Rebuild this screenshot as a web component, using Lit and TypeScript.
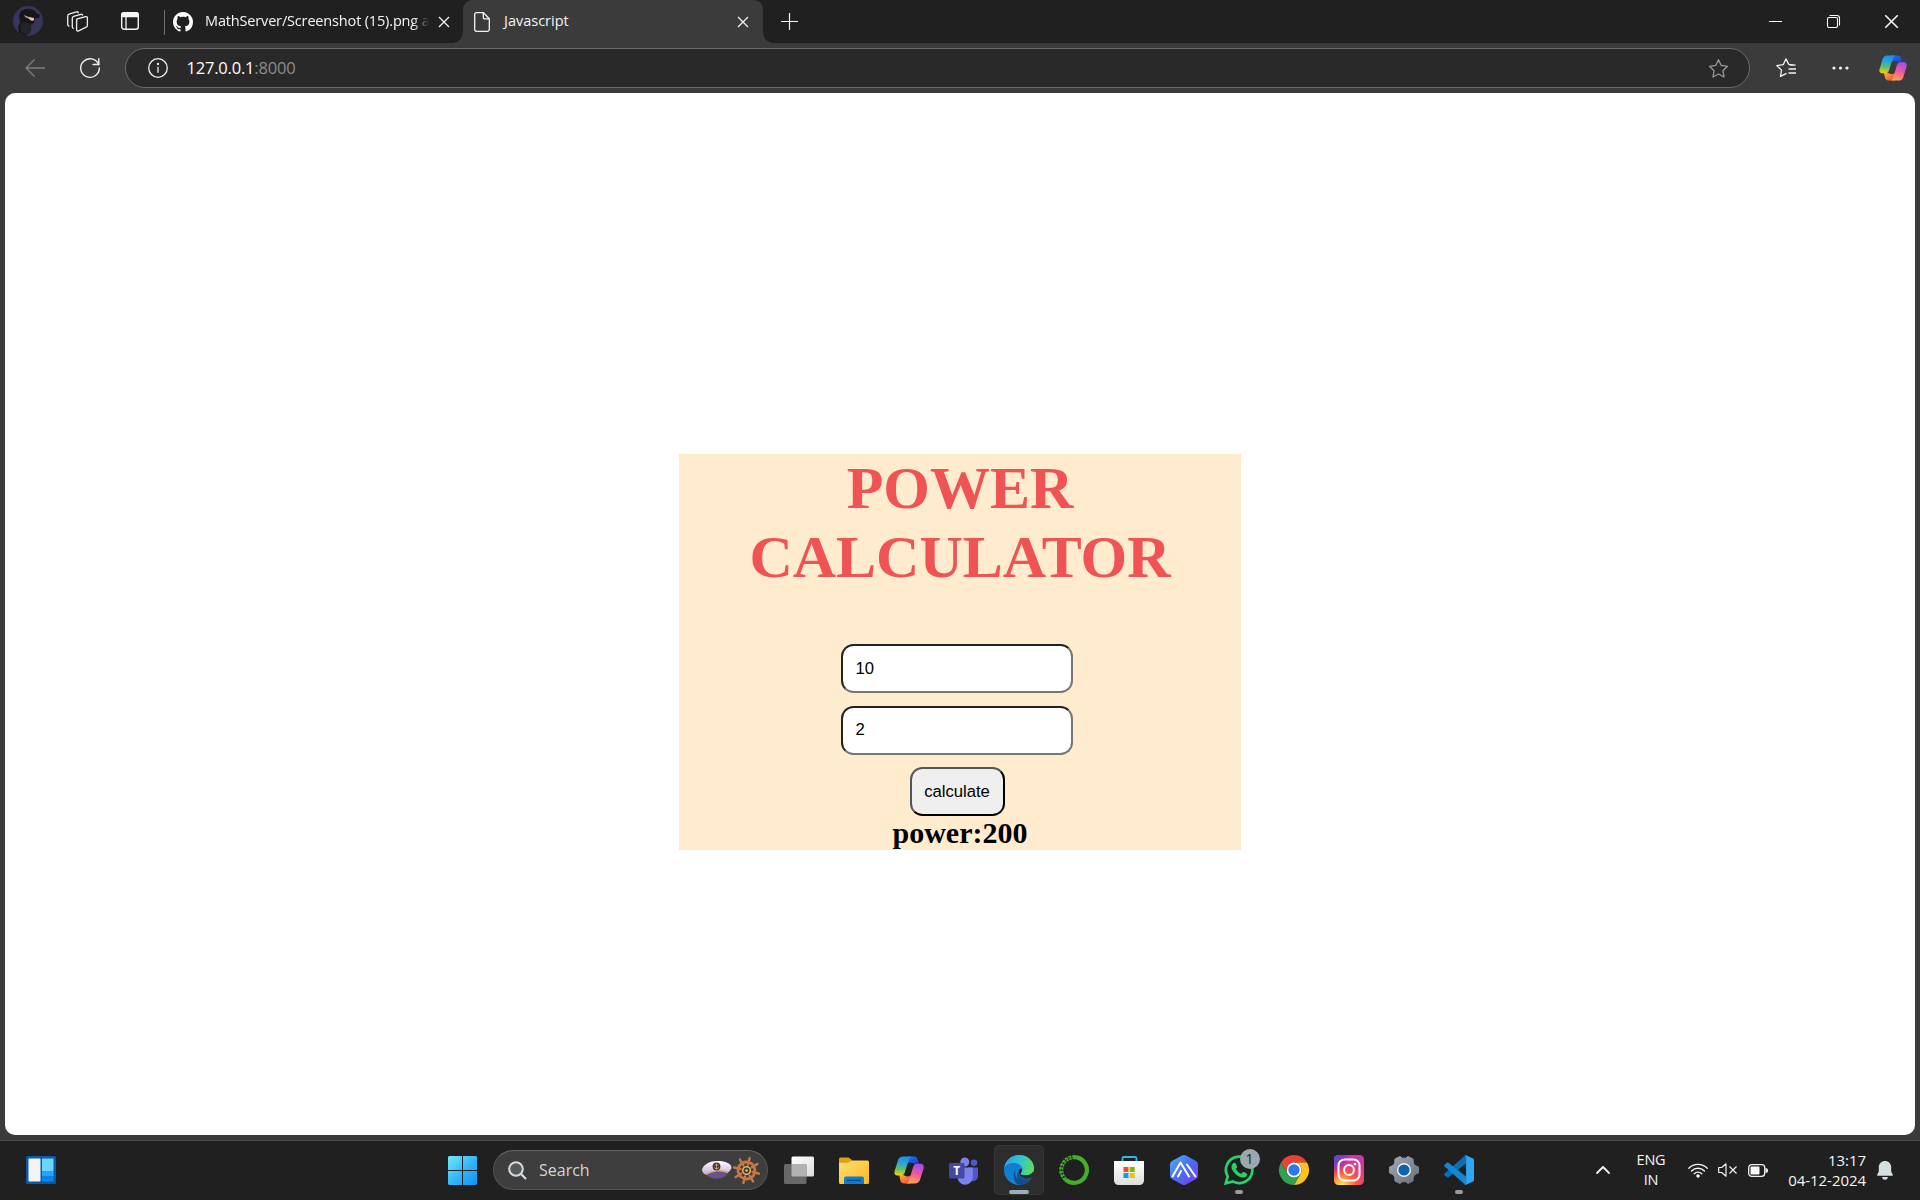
import { LitElement, html, css, svg } from "lit";
import { customElement, state } from "lit/decorators.js";

const closeIcon = (s: number) => html`<svg width=${s} height=${s} viewBox="0 0 12 12" fill="none" stroke="#f2f2f2" stroke-width="1.3"><path d="M1 1l10 10M11 1L1 11" /></svg>`;

const copilot = (id: string, s: number) => html`<svg width=${s} height=${s} viewBox="0 0 30 30">
  <defs>
    <linearGradient id="${id}a" x1="0.4" y1="0" x2="0.3" y2="1"><stop offset="0" stop-color="#1f8fef" /><stop offset=".35" stop-color="#2aa6d8" /><stop offset=".65" stop-color="#5fbf6a" /><stop offset="1" stop-color="#f5d000" /></linearGradient>
    <linearGradient id="${id}b" x1="0.7" y1="0" x2="0.4" y2="1"><stop offset="0" stop-color="#a04df5" /><stop offset=".5" stop-color="#f0569a" /><stop offset="1" stop-color="#ffa552" /></linearGradient>
    <linearGradient id="${id}c" x1="0" y1="0" x2="1" y2="1"><stop offset="0" stop-color="#1a7cf0" /><stop offset="1" stop-color="#2038c8" /></linearGradient>
    <linearGradient id="${id}d" x1="0" y1="0" x2="1" y2="1"><stop offset="0" stop-color="#ffb03a" /><stop offset="1" stop-color="#f0483a" /></linearGradient>
  </defs>
  <path d="M13.500 1.500h6.700c2.200 0 3 1.300 3.600 3.200l1.200 4.100h-4.200c-1.500 0-2.600-1.300-4.200-1.300-1.400 0-2.300.3-3 1z" fill="url(#${id}c)" />
  <path d="M16.500 28.500H10c-2.200 0-3.100-1.300-3.700-3.200L5.200 20h3.500c1.800 0 3 1.500 4.500 1.500 1.300 0 2.400-.3 3.300-1z" fill="url(#${id}d)" />
  <path d="M9 1.500h8.800c-1.600.4-2.500 1.700-3.100 3.700L10.800 17.500c-.7 2.200-1.900 3.100-4 3.100H4C.8 20.600-.2 18.800.7 15.800L4 5.200C4.800 2.700 6.500 1.500 9 1.500z" fill="url(#${id}a)" />
  <path d="M21 28.500h-8.800c1.600-.4 2.500-1.700 3.100-3.700L19.200 12c.7-2.200 1.900-3.200 4-3.200h3c3.200 0 4.200 2.100 3.300 5.100L26 24.800c-.8 2.500-2.500 3.700-5 3.700z" fill="url(#${id}b)" />
</svg>`;

const starPath = "M10 1.600l2.600 5.500 6 .8-4.400 4.200 1.100 6-5.300-2.900-5.300 2.900 1.100-6L1.400 7.900l6-.8z";

const gearTeeth = (n: number, r1: number, r2: number, w: number) =>
  Array.from({ length: n }, (_, i) => svg`<rect x=${-w / 2} y=${-r2} width=${w} height=${r2 - r1} rx="1.500" transform="rotate(${(i * 360) / n})" />`);

const appIcons: { name: string; mark?: string; art: unknown }[] = [
  {
    name: "view",
    art: html`<svg width="30" height="30" viewBox="0 0 30 30">
      <defs><linearGradient id="tv" x1="0" y1="0" x2="1" y2="1"><stop offset="0" stop-color="#fff" /><stop offset="1" stop-color="#dcdcdc" /></linearGradient></defs>
      <rect x="7.500" y="1.500" width="22.500" height="20" rx="1.500" fill="url(#tv)" />
      <rect x="0" y="9" width="22.500" height="20" rx="1.500" fill="#686868" />
      <path d="M7.500 9H21a1.500 1.500 0 0 1 1.500 1.500v11H9a1.500 1.500 0 0 1-1.500-1.500z" fill="#b2b2b2" />
    </svg>`,
  },
  {
    name: "files",
    art: html`<svg width="30" height="30" viewBox="0 0 30 30">
      <defs><linearGradient id="fe" x1="0" y1="0" x2="1" y2="1"><stop offset="0" stop-color="#ffdf78" /><stop offset="1" stop-color="#fbb91c" /></linearGradient></defs>
      <path d="M0 4A1.500 1.500 0 0 1 1.500 2.500h8.300l3 2.500L9 9H0z" fill="#e0a106" />
      <path d="M0 7.800h8.500c1 0 1.500-.4 2.100-1L12 5.500h16.500A1.500 1.500 0 0 1 30 7v20.500a1.500 1.500 0 0 1-1.500 1.500h-27A1.500 1.500 0 0 1 0 27.500z" fill="url(#fe)" />
      <path d="M5 29v-5.500A2 2 0 0 1 7 21.500h16a2 2 0 0 1 2 2V29z" fill="#0f7bd4" /><path d="M8.500 25.300h13" stroke="#064a8c" stroke-width="1.300" stroke-linecap="round" />
    </svg>`,
  },
  { name: "copilot", art: copilot("tb", 30) },
  {
    name: "teams",
    art: html`<svg width="30" height="30" viewBox="0 0 30 30">
      <circle cx="25" cy="7.700" r="3.200" fill="#5059c9" /><path d="M19 12.500h10v8a5.500 5.500 0 0 1-9.500 4z" fill="#4f58c8" />
      <circle cx="15.800" cy="7" r="4.500" fill="#7b83eb" />
      <path d="M8.500 12.500h15.300V22a7.300 7.300 0 0 1-15.300 0z" fill="#7b83eb" />
      <rect x="0" y="8" width="15.500" height="15.500" rx="1.500" fill="#4148a8" />
      <text x="7.700" y="20" font-family="Open Sans, sans-serif" font-weight="700" font-size="12" fill="#fff" text-anchor="middle">T</text>
    </svg>`,
  },
  {
    name: "edge",
    mark: "wide",
    art: html`<svg width="30" height="30" viewBox="0 0 30 30">
      <defs>
        <linearGradient id="ed1" x1="0" y1=".4" x2="1" y2=".6"><stop offset="0" stop-color="#2d9fe6" /><stop offset=".5" stop-color="#2fc5d5" /><stop offset="1" stop-color="#62dc55" /></linearGradient>
        <linearGradient id="ed2" x1="0" y1="0" x2=".6" y2="1"><stop offset="0" stop-color="#0d73c8" /><stop offset="1" stop-color="#1788df" /></linearGradient>
      </defs>
      <circle cx="15" cy="15" r="15" fill="url(#ed2)" />
      <path d="M12.200 13.500c-2.500 3.700-1.600 12.500 8.200 12 3-.2 5.400-1.500 7-2.400C24.800 27.500 20.300 30 15.500 30 9 29 8 18 12.200 13.500z" fill="#10508f" />
      <path d="M0 14C.7 6 7 0 15 0c9 0 15 6.300 15 13 0 4.500-3.400 7.300-8 7.300-3.200 0-5.600-1.200-5.200-2.200.5-1 1.700-1.700 1.700-3.600C18.500 10.500 14 8 9.500 8 4.500 8 .8 11 0 14z" fill="url(#ed1)" />
      <path d="M17 18c-1.300 1.200.5 2.700 5 2.300 3.200 0 5.800-1.500 7.100-3.500l1.100 1.800c-.5 1.800-1 3-1.700 3.700-7 4-14.200.2-13.900-6.300.2-1.500 1.300-2.500 2.500-2.500 1.500 1.500.8 3.500 0 4.500z" fill="#2d2d2d" />
      <path d="M28.500 22.300c-2.200 1.500-4.700 2.300-7.500 2-4-.4-6.800-3.600-6.700-7.800-3 4.500-.5 9.900 6.100 9.900 3 0 5.800-1 8.100-4.100z" fill="#10508f" />
    </svg>`,
  },
  {
    name: "ring",
    art: html`<svg width="30" height="30" viewBox="0 0 30 30" fill="none" stroke="#43b02a">
      <path d="M15 2.200a12.800 12.800 0 1 1-8.500 22.300" stroke-width="4.200" />
      <path d="M6.500 24.500A12.800 12.800 0 0 1 15 2.200" stroke-width="4" stroke-dasharray="2.800 .8" />
      <path d="M5.500 23A12.800 12.800 0 0 1 13.500 2.300" stroke="#202020" stroke-width="1" stroke-dasharray="2.200 1.500" />
    </svg>`,
  },
  {
    name: "store",
    art: html`<svg width="30" height="30" viewBox="0 0 30 30">
      <defs><linearGradient id="st" x1="0" y1="0" x2="0" y2="1"><stop offset="0" stop-color="#fff" /><stop offset="1" stop-color="#dedede" /></linearGradient></defs>
      <path d="M8.500 7V3.500A1.500 1.500 0 0 1 10 2h11a1.500 1.500 0 0 1 1.500 1.500V7" fill="none" stroke="#2bb9f0" stroke-width="1.800" />
      <path d="M0 6h30v19.500a4.500 4.500 0 0 1-4.500 4.500h-21A4.500 4.500 0 0 1 0 25.500z" fill="url(#st)" />
      <path d="M9.500 12h5v5h-5z" fill="#f25022" /><path d="M15.700 12h5v5h-5z" fill="#7fba00" /><path d="M9.500 18h5v5h-5z" fill="#00a4ef" /><path d="M15.700 18h5v5h-5z" fill="#ffb900" />
    </svg>`,
  },
  {
    name: "hex",
    art: html`<svg width="30" height="30" viewBox="0 0 30 30">
      <defs><linearGradient id="hx" x1="0" y1="0" x2="1" y2="1"><stop offset="0" stop-color="#4fb2f5" /><stop offset=".5" stop-color="#4a6cf0" /><stop offset="1" stop-color="#7a3cf0" /></linearGradient></defs>
      <path d="M13 .6q2-1 4 0l10 5.500q2 1.200 2 3.400v11q0 2.200-2 3.400l-10 5.500q-2 1-4 0L3 23.900q-2-1.200-2-3.400v-11q0-2.200 2-3.400z" fill="url(#hx)" />
      <path d="M3.500 21.500L11.500 7.500l8.500 14M9 21.500l3-5.500M18 9.500l8.500 12" fill="none" stroke="#fff" stroke-width="2" stroke-linecap="round" stroke-linejoin="round" />
    </svg>`,
  },
  {
    name: "chat",
    mark: "small",
    art: html`<svg width="30" height="30" viewBox="0 0 30 30">
      <path d="M1.800 28.300l1.900-6.900a13.200 13.200 0 1 1 5.100 5z" fill="none" stroke="#25d366" stroke-width="2.700" />
      <path d="M10.300 7.700c.6 0 1.100 0 1.500.9l1.200 2.900c.2.500 0 1-.3 1.400l-.9 1.100c1.300 2.300 3 3.800 5.400 4.900l1.300-1.500c.4-.5.8-.5 1.300-.3l2.700 1.300c.6.300.7.600.6 1.300-.4 2-2.200 3-4.200 2.900-5.300-.6-10.400-5.600-11.400-9.900-.3-2.100 1.200-5 2.800-5z" fill="#25d366" />
    </svg>`,
  },
  {
    name: "chrome",
    art: html`<svg width="30" height="30" viewBox="0 0 30 30">
      <path d="M2 7.500A15 15 0 0 1 28 7.500H15a7.500 7.500 0 0 0-6.500 11.200z" fill="#ea4335" />
      <path d="M28 7.500A15 15 0 0 1 15 30l6.500-11.300A7.500 7.500 0 0 0 15 7.500z" fill="#fcc21f" />
      <path d="M15 30A15 15 0 0 1 2 7.500l6.500 11.200a7.500 7.500 0 0 0 13 0z" fill="#2fa14f" />
      <circle cx="15" cy="15" r="7.400" fill="#fff" /><circle cx="15" cy="15" r="5.700" fill="#2f78ea" />
    </svg>`,
  },
  {
    name: "camera",
    art: html`<svg width="30" height="30" viewBox="0 0 30 30">
      <defs>
        <radialGradient id="ig1" cx=".27" cy="1.070" r="1"><stop offset="0" stop-color="#ffdd55" /><stop offset=".1" stop-color="#ffdd55" /><stop offset=".5" stop-color="#ff543e" /><stop offset="1" stop-color="#c837ab" /></radialGradient>
        <radialGradient id="ig2" cx="-.1" cy="0" r=".65"><stop offset="0" stop-color="#3771c8" /><stop offset=".3" stop-color="#5a50c8" /><stop offset="1" stop-color="#6600ff" stop-opacity="0" /></radialGradient>
      </defs>
      <rect width="30" height="30" rx="4.500" fill="url(#ig1)" /><rect width="30" height="30" rx="4.500" fill="url(#ig2)" />
      <g fill="none" stroke="#fff" stroke-width="2"><rect x="4.500" y="4.500" width="21" height="21" rx="6" /><circle cx="15" cy="15" r="4.900" /></g><circle cx="21" cy="9" r="1.300" fill="#fff" />
    </svg>`,
  },
  {
    name: "settings",
    art: html`<svg width="30" height="30" viewBox="-15 -15 30 30">
      <defs><linearGradient id="gs" x1="0" y1="0" x2="1" y2="1"><stop offset="0" stop-color="#a1a9b1" /><stop offset="1" stop-color="#66707a" /></linearGradient></defs>
      <path d="M-4-13.500l2.300 1.700h3.400L4-13.500 9-11l.3 3.800 1.500 2.700 3.700 1.500v6l-3.700 1.500-1.500 2.700L9 11l-5 2.500-2.300-1.700h-3.400L-4 13.500-9 11l-.3-3.800-1.500-2.700-3.700-1.500v-6l3.700-1.500 1.500-2.700L-9-11z" fill="url(#gs)" stroke="url(#gs)" stroke-linejoin="round" />
      <circle r="7" fill="#f1f3f5" /><circle r="5.600" fill="#0f63ad" />
    </svg>`,
  },
  {
    name: "code",
    mark: "small",
    art: html`<svg width="30" height="30" viewBox="0 0 30 30">
      <path d="M22 0v8.500L4.500 22.300q-.8.600-1.600 0L.6 20.300q-.9-.9 0-1.800L21 .5z" fill="#0b6fb8" />
      <path d="M22 30v-8.500L4.500 7.700q-.8-.6-1.600 0L.6 9.700q-.9.900 0 1.800L21 29.500z" fill="#1487d0" />
      <path d="M22 .2l7 3.200q1 .5 1 1.600v20q0 1.100-1 1.600l-7 3.200q-1 .3-1.800-.4 1.800.7 1.900-1.400V2Q22-.1 20.300.5 21.100-.1 22 .2z" fill="#2ea7f2" />
    </svg>`,
  },
];

@customElement("browser-tabs")
class BrowserTabs extends LitElement {
  static styles = css`
    :host { display: flex; height: 43px; background: #202020; color: #f4f4f4; font: 14.500px "Open Sans", "Noto Sans", sans-serif; }
    svg { display: block; flex: none; overflow: visible; }
    .cell { display: flex; align-items: center; justify-content: center; height: 42px; }
    .avatar { width: 56px; } .spaces { width: 43px; } .actions { width: 61px; }
    .divider { width: 1px; height: 25px; margin: 10px 0 0 4px; background: #707070; }
    .tab { display: flex; align-items: center; box-sizing: border-box; height: 43px; }
    .idle { width: 298px; padding-left: 8px; }
    .active { position: relative; width: 300px; padding-left: 11px; background: #3b3b3b; border-radius: 9px 9px 0 0; }
    .active::before, .active::after { content: ""; position: absolute; bottom: 0; width: 10px; height: 10px; }
    .active::before { left: -10px; background: radial-gradient(circle at 0 0, #202020 9.500px, #3b3b3b 10px); }
    .active::after { right: -10px; background: radial-gradient(circle at 100% 0, #202020 9.500px, #3b3b3b 10px); }
    .name { white-space: nowrap; line-height: 24px; margin-top: -2px; }
    .long { width: 224px; margin-left: 12px; letter-spacing: -0.160px; mask-image: linear-gradient(90deg, #000 208px, transparent 224px); }
    .short { width: 232px; margin-left: 14px; letter-spacing: 0; }
    .x { padding-top: 1px; margin-left: 9px; } .active .x { margin-left: 0; padding-left: 1px; }
    .plus { width: 52px; } .grow { flex: 1; }
    .win { width: 58px; }
  `;
  render() {
    return html`
      <div class="cell avatar"><svg width="30" height="30" viewBox="0 0 30 30">
        <circle cx="15" cy="15" r="15" fill="#38345a" />
        <path d="M8 5q5-3 10-2 4 1 5 4l4 2-1 3h-3l-2 3v2l-3 2v3l-1 5-4 3-7-3-1-6 2-5-1-6z" fill="#171717" />
        <path d="M7 18l5-2 6 2-1 9-3 2-6-3z" fill="#242424" /><path d="M16 11l5 1v2l-2 1-3-2z" fill="#efc0b4" /><path d="M11 9l5 2v2l-4-2z" fill="#a8989f" />
      </svg></div>
      <div class="cell spaces"><svg width="21" height="21" viewBox="0 0 21 21" fill="none" stroke="#eee" stroke-width="1.300" stroke-linejoin="round" stroke-linecap="round">
        <path d="M10.300 7.900l8.300-2.300q1.800-.4 1.800 1.400v7.500q0 1.300-1.200 1.700l-7.600 3.600q-2 .8-2-1.200V9.500q0-1.300.7-1.600z" />
        <path d="M15.500 4.200q-.2-1.300-1.600-.9L6.600 5.400Q5.300 5.900 5.300 7.200v8.500q0 1.300 1 1.600" /><path d="M11.300 1.900q-.3-1.500-1.800-1L2 3.200Q.7 3.700.7 5v8.300q0 1.600 1.200 1.700" />
      </svg></div>
      <div class="cell actions"><svg width="18" height="18" viewBox="0 0 18 18"><rect x=".7" y=".7" width="16.600" height="16.600" rx="2.500" fill="none" stroke="#f4f4f4" stroke-width="1.400" /><path d="M0 5.200V3Q0 0 3 0h12q3 0 3 3v2.200z" fill="#f4f4f4" /><path d="M5 5v12.500" stroke="#f4f4f4" stroke-width="1.300" /></svg></div>
      <div class="divider"></div>
      <div class="tab idle">
        <svg width="20" height="20" viewBox="0 0 16 16"><path fill="#fff" d="M8 0C3.580 0 0 3.580 0 8c0 3.540 2.290 6.530 5.470 7.590.4.070.55-.17.55-.38 0-.19-.01-.82-.01-1.490-2.010.37-2.530-.49-2.690-.94-.09-.23-.48-.94-.82-1.130-.28-.15-.68-.52-.01-.53.63-.01 1.080.58 1.230.82.720 1.210 1.870.87 2.330.66.070-.52.280-.87.510-1.070-1.780-.2-3.640-.89-3.640-3.950 0-.87.310-1.590.82-2.150-.08-.2-.36-1.020.08-2.120 0 0 .67-.21 2.200.82.640-.18 1.320-.27 2-.27s1.360.09 2 .27c1.530-1.040 2.200-.82 2.200-.82.440 1.100.16 1.920.08 2.120.51.560.82 1.270.82 2.150 0 3.070-1.870 3.750-3.650 3.950.29.250.54.730.54 1.480 0 1.070-.01 1.930-.01 2.200 0 .21.150.46.550.38A8.010 8.010 0 0 0 16 8c0-4.420-3.580-8-8-8z" /></svg>
        <span class="name long">MathServer/Screenshot (15).png a</span><span class="x">${closeIcon(12)}</span>
      </div>
      <div class="tab active">
        <svg width="16" height="20" viewBox="0 0 16 20" fill="none" stroke="#f2f2f2" stroke-width="1.300" stroke-linejoin="round"><path d="M2.500.7h7l5.800 6v10.800q0 1.800-1.800 1.800h-11q-1.800 0-1.800-1.800v-15Q.7.7 2.500.7z" /><path d="M9.300.7v4.500q0 1.700 1.700 1.700h4.300" /></svg>
        <span class="name short">Javascript</span><span class="x">${closeIcon(12)}</span>
      </div>
      <div class="cell plus"><svg width="17" height="17" viewBox="0 0 17 17" stroke="#f4f4f4" stroke-width="1.200"><path d="M8.500 0v17M0 8.500h17" /></svg></div>
      <div class="grow"></div>
      <div class="cell win"><svg width="13" height="13" viewBox="0 0 13 13"><path d="M0 6.500h13" stroke="#fff" /></svg></div>
      <div class="cell win"><svg width="13" height="13" viewBox="0 0 13 13" fill="none" stroke="#fff" stroke-width="1.100"><rect x=".5" y="2.500" width="10" height="10" rx="1.500" /><path d="M2.500.5H10q2.500 0 2.500 2.500v7.500" /></svg></div>
      <div class="cell win">${closeIcon(15)}</div>
    `;
  }
}

@customElement("browser-toolbar")
class BrowserToolbar extends LitElement {
  static styles = css`
    :host { display: flex; align-items: center; height: 50px; background: #3b3b3b; }
    svg { display: block; flex: none; overflow: visible; }
    .cell { display: flex; justify-content: center; flex: none; }
    .back { width: 70px; } .reload { width: 40px; margin-right: 15px; }
    .bar { display: flex; flex: none; align-items: center; box-sizing: border-box; width: 1625px; height: 40px; border: 1px solid #6b6b6b; border-radius: 20px; background: #292929; padding: 0 20px 0 21.500px; font: 16.500px "Open Sans", "Noto Sans", sans-serif; color: #fff; }
    .url { flex: 1; margin-left: 19px; letter-spacing: -0.200px; line-height: 24px; margin-top: -1px; }
    .port { color: #8d8d8d; }
    .fav { width: 71px; } .more { width: 39px; } .ai { width: 60px; box-sizing: border-box; padding-left: 6px; }
  `;
  render() {
    return html`
      <div class="cell back"><svg width="20" height="18" viewBox="0 0 20 18" fill="none" stroke="#7f7f7f" stroke-width="1.300"><path d="M20 9H1M9.500.5L1 9l8.500 8.500" /></svg></div>
      <div class="cell reload"><svg width="20" height="20" viewBox="0 0 20 20" fill="none" stroke="#f0f0f0" stroke-width="1.400" stroke-linecap="round"><path d="M18.600 6.500A9.300 9.300 0 1 0 19.300 10" /><path d="M18.800.8v5.700h-5.700" /></svg></div>
      <div class="bar">
        <svg width="20" height="20" viewBox="0 0 20 20" fill="none" stroke="#f0f0f0" stroke-width="1.300"><circle cx="10" cy="10" r="9.300" /><path d="M10 8.700v6" /><circle cx="10" cy="6" r=".5" fill="#fff" /></svg>
        <span class="url">127.0.0.1<span class="port">:8000</span></span>
        <svg width="21" height="21" viewBox="0 0 20 20" fill="none" stroke="#9a9a9a" stroke-width="1.200" stroke-linejoin="round"><path d=${starPath} /></svg>
      </div>
      <div class="cell fav"><svg width="20" height="20" viewBox="0 0 20 20" fill="none" stroke="#f2f2f2" stroke-width="1.300" stroke-linejoin="round"><path d="M19.500 7.200l-6.700-.8L10 .9 7.200 6.700.8 7.600l4.700 4.500-1 6.300 6-3M13.500 7.200h6M12.500 11h7.500M12.500 15h7.500" /></svg></div>
      <div class="cell more"><svg width="17" height="4" viewBox="0 0 17 4" fill="#f2f2f2"><circle cx="2" cy="2" r="1.600" /><circle cx="8.500" cy="2" r="1.600" /><circle cx="15" cy="2" r="1.600" /></svg></div>
      <div class="cell ai">${copilot("br", 28)}</div>
    `;
  }
}

@customElement("power-calculator")
class PowerCalculator extends LitElement {
  static styles = css`
    :host { display: block; width: 562px; height: 396px; background: #ffebcd; text-align: center; color: #000; font-family: "Liberation Serif", serif; overflow: hidden; }
    h1 { margin: 0 auto; width: 500px; font-size: 60px; line-height: 69px; color: #ef5353; }
    form { display: flex; flex-direction: column; align-items: center; gap: 13px; margin: 52px 6px 0 0; }
    input, button { box-sizing: border-box; height: 49px; border-width: 2px; border-radius: 12.500px; padding: 0 12.500px; font: 16.670px "Liberation Sans", sans-serif; color: #000; }
    input { width: 232px; background: #fff; border-style: solid; border-color: #222 #767676 #767676 #222; }
    .second { padding-bottom: 1px; }
    button { width: 95px; margin-top: -1px; padding: 0; background: #efefef; border-style: solid; border-color: #555 #000 #000 #555; }
    h2 { margin: 0; font-size: 30px; line-height: 34px; }
  `;
  @state() private watts = "200";
  private compute(e: Event) {
    e.preventDefault();
    const [i, r] = [...this.renderRoot.querySelectorAll("input")].map((n) => Number(n.value));
    this.watts = String(i * i * r);
  }
  render() {
    return html`<h1>POWER CALCULATOR</h1>
      <form @submit=${this.compute}><input value="10" /><input class="second" value="2" /><button>calculate</button></form>
      <h2>power:${this.watts}</h2>`;
  }
}

@customElement("task-bar")
class TaskBar extends LitElement {
  static styles = css`
    :host { display: flex; align-items: center; box-sizing: border-box; height: 60px; padding-bottom: 1px; border-top: 1px solid #484848; background: #202020; color: #f5f5f5; font: 15px "Open Sans", "Noto Sans", sans-serif; }
    svg { display: block; flex: none; overflow: visible; }
    .widgets { margin-left: 26px; }
    .start { margin-left: 392px; }
    .search { display: flex; flex: none; align-items: center; box-sizing: border-box; width: 275px; height: 40px; margin: 0 3px 0 16px; padding: 0 6px 0 14px; border: 1px solid #545454; border-top-color: #666; border-radius: 20px; background: #3e3e3e; color: #d4d4d4; font-size: 16px; }
    .hint { flex: 1; margin-left: 12px; letter-spacing: 0; }
    .app { position: relative; display: flex; flex: none; align-items: center; justify-content: center; width: 50px; height: 50px; margin: 0 2.500px; border-radius: 5px; }
    .wide { background: #2d2d2d; box-shadow: inset 0 0 0 1px #363636; }
    .wide::after, .small::after { content: ""; position: absolute; bottom: 1px; height: 4px; border-radius: 2px; }
    .wide::after { width: 20px; background: #9fadb5; } .small::after { width: 8px; background: #9b9b9b; }
    .badge { position: absolute; left: 26px; top: 4px; width: 20px; height: 20px; border-radius: 50%; background: #9ba9ae; color: #1c1c1c; font-size: 14px; line-height: 20px; text-align: center; }
    .grow { flex: 1; }
    .lang { width: 50px; margin: 0 12px 0 16px; text-align: center; line-height: 20px; letter-spacing: -0.200px; font-size: 14.500px; }
    .vol { margin: 0 11px 0 10px; }
    .clock { width: 90px; margin-left: 8px; text-align: right; line-height: 20px; font-size: 15px; letter-spacing: -0.050px; white-space: nowrap; }
    .bell { margin: 0 27px 0 11px; }
  `;
  render() {
    return html`
      <svg class="widgets" width="30" height="28" viewBox="0 0 30 28"><rect width="30" height="28" rx="1.500" fill="#0b5aa8" /><rect x="2.500" y="2.500" width="12" height="23" rx="1" fill="#f4f4f4" /><path d="M16 2.500h11.500v13H16z" fill="#68d6fb" /><path d="M16 15.500h11.500v5H16z" fill="#22a5f7" /><path d="M16 20.500h11.500v5H16z" fill="#0a84ea" /></svg>
      <svg class="start" width="29" height="29" viewBox="0 0 29 29"><defs><linearGradient id="ws" gradientUnits="userSpaceOnUse" x1="0" y1="0" x2="29" y2="29"><stop offset="0" stop-color="#73e9fd" /><stop offset=".5" stop-color="#35b9f8" /><stop offset="1" stop-color="#0f90f5" /></linearGradient></defs><path d="M1 0h13v14H0V1zM15 0h13l1 1v13H15zM0 15h14v14H1l-1-1zM15 15h14v13l-1 1H15z" fill="url(#ws)" /></svg>
      <div class="search">
        <svg width="19" height="19" viewBox="0 0 19 19" fill="none" stroke="#d8dade" stroke-width="2"><circle cx="8" cy="8" r="6.800" fill="#555a5c" /><path d="M12.800 12.800l5.200 5.200" stroke-width="2.300" /></svg>
        <span class="hint">Search</span>
        <svg width="30" height="20" viewBox="0 0 30 20">
          <defs><linearGradient id="cap" x1="0" y1="0" x2="0" y2="1"><stop offset="0" stop-color="#fff" /><stop offset="1" stop-color="#bfb0dc" /></linearGradient></defs>
          <path d="M3.500 13c6-4 16-4 22.500-1-1 5-7 7-13 6.600C8 18.200 4 16 3.500 13z" fill="#68518c" />
          <path d="M0 9.500C2 4 8 1 15 1s13.500 1.800 14.500 6c0 2.500-2 4.500-3.500 5.500-7-3-16-2-22.500 2C1.500 13.500 0 12 0 9.500z" fill="url(#cap)" />
          <path d="M4 14.500c6-4 15-5 22-2" fill="none" stroke="#e3a94c" stroke-width="1.500" /><circle cx="14.500" cy="6.500" r="3.900" fill="#3b3546" /><path d="M14.500 3.500v6M12.500 5h4M12 7.500q2.500 3 5 0" fill="none" stroke="#e3b35c" stroke-width=".8" />
        </svg>
        <svg width="29" height="29" viewBox="-14.500 -14.500 29 29"><g transform="rotate(14)"><g fill="#c97b45">${gearTeeth(8, 5, 14, 2.4)}</g><circle r="8.500" fill="none" stroke="#c97643" stroke-width="2.800" /><circle r="3.800" fill="#40383a" stroke="#f0b64c" stroke-width="1.600" /><circle r="1.300" fill="#f0c465" /></g></svg>
      </div>
      ${appIcons.map((a) => html`<div class="app ${a.mark ?? ""}">${a.art}${a.name === "chat" ? html`<span class="badge">1</span>` : ""}</div>`)}
      <div class="grow"></div>
      <svg width="14" height="8" viewBox="0 0 14 8" fill="none" stroke="#f5f5f5" stroke-width="1.800" stroke-linecap="round" stroke-linejoin="round"><path d="M1 7l6-6 6 6" /></svg>
      <div class="lang">ENG<br />IN</div>
      <svg width="20" height="15" viewBox="0 0 20 15" fill="none" stroke="#f5f5f5" stroke-width="1.400" stroke-linecap="round"><path d="M.8 5.200a13 13 0 0 1 18.400 0M3.500 8a9.200 9.200 0 0 1 13 0M6.200 10.700a5.400 5.400 0 0 1 7.600 0" /><circle cx="10" cy="13" r="1.400" fill="#f5f5f5" stroke-width=".6" /></svg>
      <svg class="vol" width="19" height="14" viewBox="0 0 19 14" fill="none" stroke="#f0f0f0" stroke-width="1.200" stroke-linejoin="round"><path d="M.7 4.500h3L8 .8v12.400L3.700 9.500h-3z" /><path d="M11.500 3.500l7 7M18.500 3.500l-7 7" /></svg>
      <svg width="20" height="13" viewBox="0 0 20 13"><rect x=".7" y=".7" width="16" height="11.600" rx="3" fill="none" stroke="#f0f0f0" stroke-width="1.300" /><rect x="2.500" y="2.500" width="9" height="8" rx="1" fill="#f8f8f8" /><path d="M17.500 4q2.500 0 2.500 2.500T17.500 9z" fill="#f0f0f0" /></svg>
      <div class="clock">13:17<br />04-12-2024</div>
      <svg class="bell" width="16" height="19" viewBox="0 0 16 19" fill="#d5dee1"><path d="M8 0c3.500 0 6.200 2.700 6.200 6.200v4.600l1.600 2.700q.5 1.200-.7 1.300H.9q-1.200-.1-.7-1.300l1.600-2.700V6.200C1.800 2.700 4.500 0 8 0z" /><path d="M5.200 16h5.600a2.800 2.800 0 0 1-5.600 0z" /></svg>
    `;
  }
}

@customElement("app-root")
class AppRoot extends LitElement {
  static styles = css`
    :host { display: flex; flex-direction: column; width: 1920px; height: 1200px; overflow: hidden; background: #3b3b3b; }
    .page { display: flex; justify-content: center; align-items: flex-start; box-sizing: border-box; height: 1042px; margin: 0 5px 5px; padding-top: 361px; background: #fff; border-radius: 10px; }
  `;
  render() {
    return html`<browser-tabs></browser-tabs><browser-toolbar></browser-toolbar>
      <main class="page"><power-calculator></power-calculator></main>
      <task-bar></task-bar>`;
  }
}
